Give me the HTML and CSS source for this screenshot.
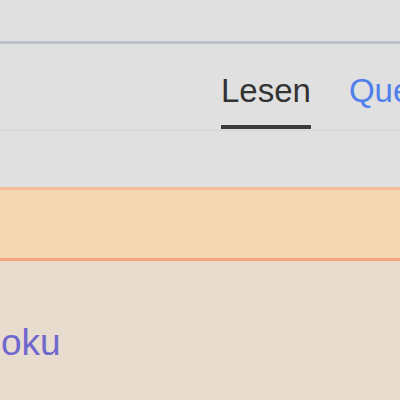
FILE: index.html
```html
<!DOCTYPE html>
<html lang="de">
<head>
<meta charset="utf-8">
<link rel="stylesheet" href="styles.css">
</head>
<body>
<div class="top"></div>
<div class="tabs">
  <a class="tab tab-active">Lesen</a>
  <a class="tab tab-link">Quelltext bearbeiten</a>
</div>
<div class="gap"></div>
<div class="banner"></div>
<div class="content"><a class="visited">oku</a></div>
</body>
</html>
```
FILE: styles.css
```css
html, body {
  margin: 0;
  padding: 0;
  background: #e0e0e0;
  overflow: hidden;
  font-family: "Liberation Sans", Arial, sans-serif;
}
.top {
  height: 41px;
  border-bottom: 3px solid #bdc3c9;
}
.tabs {
  height: 86px;
  border-bottom: 1px solid #d2d6da;
  display: flex;
  align-items: flex-start;
  gap: 38px;
  padding-left: 221px;
  white-space: nowrap;
  overflow: hidden;
}
.tab {
  font-size: 33px;
  line-height: 36px;
  padding-top: 29px;
  padding-bottom: 16px;
  border-bottom: 4px solid transparent;
}
.tab-active {
  color: #333333;
  border-bottom-color: #3a3a3a;
}
.tab-link {
  color: #4f7fea;
}
.gap {
  height: 56px;
}
.banner {
  height: 68px;
  background: #f5d6b3;
  border-top: 3px solid #f3bd9e;
  border-bottom: 3px solid #f5a27f;
  box-shadow: 0 3px 0 #ddb6a4;
}
.content {
  box-sizing: border-box;
  background: #e7dccd;
  height: 139px;
  padding-top: 62px;
  padding-left: 1px;
  font-size: 37px;
  line-height: 40px;
}
.visited {
  color: #7067cf;
}
```
